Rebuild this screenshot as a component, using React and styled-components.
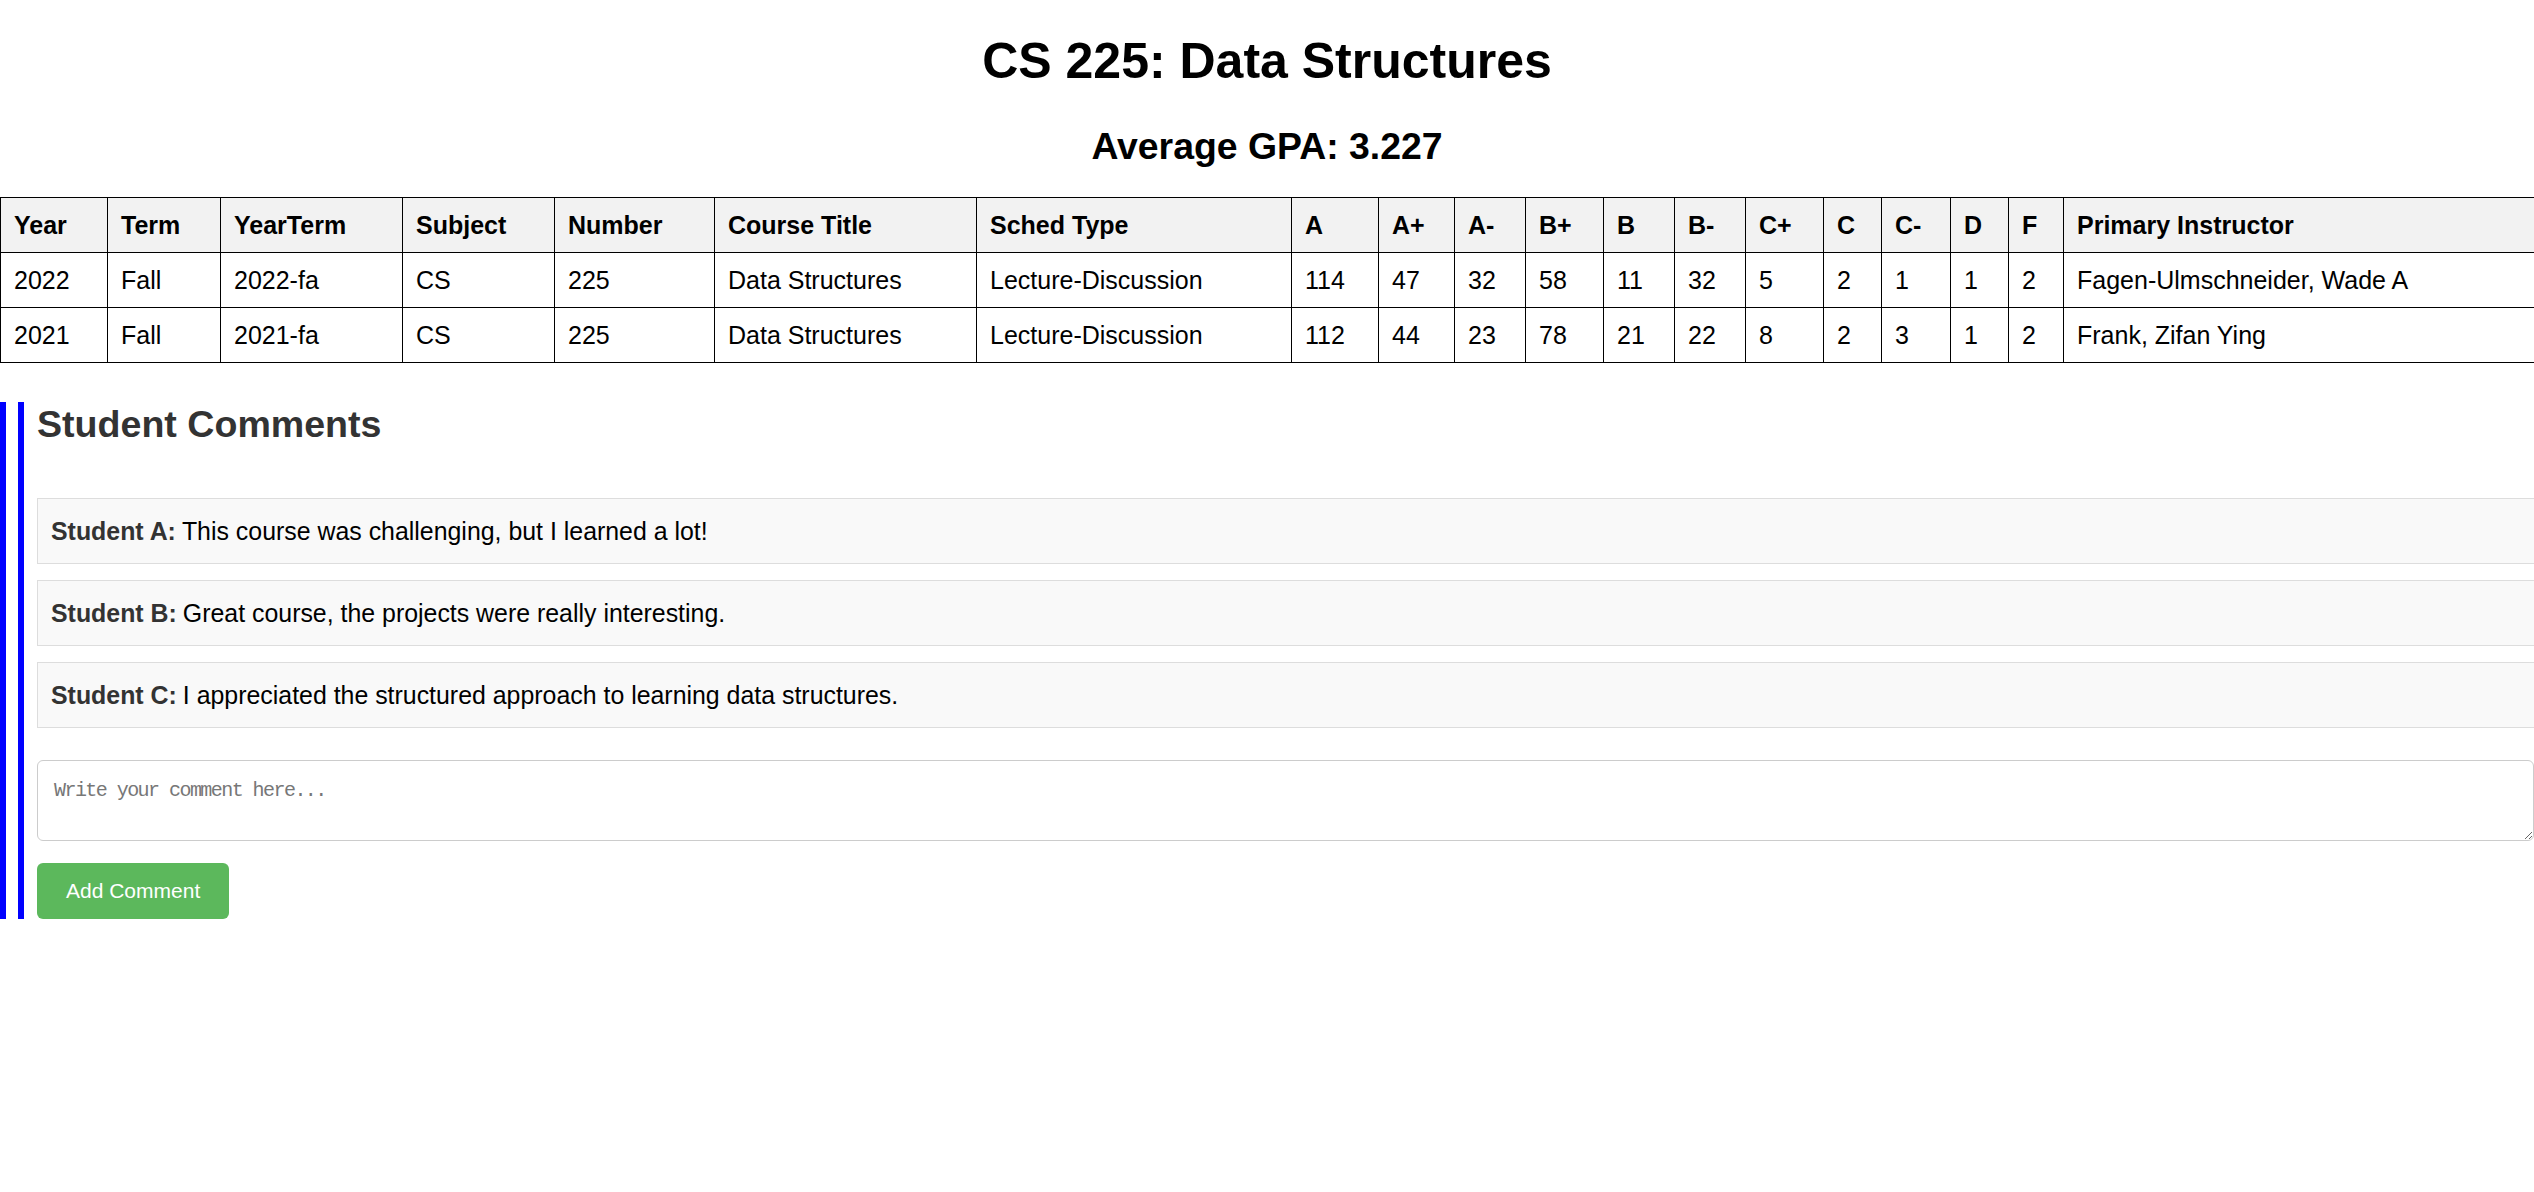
import styled, { createGlobalStyle } from 'styled-components'

const GlobalStyle = createGlobalStyle`
    html, body {
        margin: 0;
        padding: 0;
        background: #fff;
    }
    body {
        font-family: "Liberation Sans", Arial, sans-serif;
        color: #000;
    }
`

const Page = styled.div`
    width: 100%;
    padding-top: 32px;
`

const Title = styled.h1`
    margin: 0;
    font-size: 50px;
    line-height: 59px;
    font-weight: bold;
    text-align: center;
`

const Gpa = styled.h2`
    margin: 33px 0 29px;
    font-size: 37.4px;
    line-height: 44px;
    font-weight: bold;
    text-align: center;
`

const GradeTable = styled.table`
    width: 100%;
    table-layout: fixed;
    border-collapse: collapse;
    font-size: 25px;

    th, td {
        border: 1px solid #000;
        padding: 12px 13px;
        line-height: 30px;
        text-align: left;
        white-space: nowrap;
        overflow: hidden;
    }
    th {
        background: #f2f2f2;
        font-weight: bold;
    }
    th:last-child, td:last-child {
        border-right: none;
    }
`

const Col = styled.col`
    width: ${p => (p.$w ? `${p.$w}px` : 'auto')};
`

const CommentsSection = styled.section`
    margin-top: 39px;
    border-left: 6px solid #0000ff;
    padding-left: 12px;
`

const CommentsInner = styled.div`
    border-left: 6px solid #0000ff;
    padding-left: 13px;
`

const SectionTitle = styled.h2`
    margin: 0 0 52px;
    font-size: 37.6px;
    line-height: 44px;
    font-weight: bold;
    color: #333;
`

const CommentCard = styled.div`
    box-sizing: border-box;
    height: 66px;
    margin-bottom: 16px;
    padding: 0 13px;
    display: flex;
    align-items: center;
    background: #f9f9f9;
    border: 1px solid #ddd;
    border-right: none;
    font-size: 24.9px;
    color: #000;

    &:last-of-type {
        margin-bottom: 0;
    }
`

const Author = styled.strong`
    color: #333;
    margin-right: 6px;
`

const CommentBox = styled.textarea`
    display: block;
    box-sizing: border-box;
    width: 100%;
    height: 81px;
    margin-top: 32px;
    padding: 18px 16px 12px;
    border: 1px solid #ccc;
    border-radius: 6px;
    font-family: "Liberation Mono", "Courier New", monospace;
    font-size: 20px;
    letter-spacing: -1.55px;
    resize: vertical;

    &::placeholder {
        color: #777;
    }
`

const AddButton = styled.button`
    display: block;
    margin-top: 22px;
    height: 56px;
    padding: 0 29px;
    border: none;
    border-radius: 6px;
    background: #5cb85c;
    color: #fff;
    font-family: "Liberation Sans", Arial, sans-serif;
    font-size: 21px;
    cursor: pointer;
`

const columns = [
    ['Year', 107], ['Term', 113], ['YearTerm', 182], ['Subject', 152], ['Number', 160],
    ['Course Title', 262], ['Sched Type', 315], ['A', 87], ['A+', 76], ['A-', 71],
    ['B+', 78], ['B', 71], ['B-', 71], ['C+', 78], ['C', 58], ['C-', 69], ['D', 58],
    ['F', 55], ['Primary Instructor', null]
]

const rows = [
    ['2022', 'Fall', '2022-fa', 'CS', '225', 'Data Structures', 'Lecture-Discussion', 114, 47, 32, 58, 11, 32, 5, 2, 1, 1, 2, 'Fagen-Ulmschneider, Wade A'],
    ['2021', 'Fall', '2021-fa', 'CS', '225', 'Data Structures', 'Lecture-Discussion', 112, 44, 23, 78, 21, 22, 8, 2, 3, 1, 2, 'Frank, Zifan Ying']
]

const comments = [
    { author: 'Student A', text: 'This course was challenging, but I learned a lot!' },
    { author: 'Student B', text: 'Great course, the projects were really interesting.' },
    { author: 'Student C', text: 'I appreciated the structured approach to learning data structures.' }
]

export default function App() {
    return (
        <Page>
            <GlobalStyle />
            <Title>CS 225: Data Structures</Title>
            <Gpa>Average GPA: 3.227</Gpa>

            <GradeTable>
                <colgroup>
                    {columns.map(([name, w]) => <Col key={name} $w={w} />)}
                </colgroup>
                <thead>
                    <tr>
                        {columns.map(([name]) => <th key={name}>{name}</th>)}
                    </tr>
                </thead>
                <tbody>
                    {rows.map(row => (
                        <tr key={row[2]}>
                            {row.map((cell, i) => <td key={i}>{cell}</td>)}
                        </tr>
                    ))}
                </tbody>
            </GradeTable>

            <CommentsSection>
                <CommentsInner>
                    <SectionTitle>Student Comments</SectionTitle>
                    {comments.map(c => (
                        <CommentCard key={c.author}>
                            <Author>{c.author}:</Author>
                            {c.text}
                        </CommentCard>
                    ))}
                    <CommentBox placeholder="Write your comment here..." />
                    <AddButton>Add Comment</AddButton>
                </CommentsInner>
            </CommentsSection>
        </Page>
    )
}
